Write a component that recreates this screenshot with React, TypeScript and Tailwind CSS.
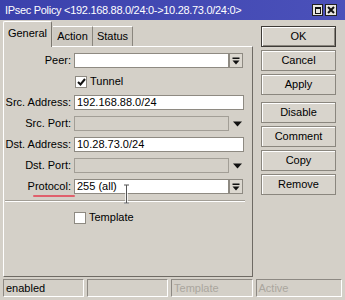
import { Fragment } from 'react'

const DropBtn = () => (
    <div className="flex h-[15px] w-[14px] items-center justify-center border border-[#8e8a82] bg-[#dcd8d0]">
        <svg width="8" height="8" viewBox="0 0 8 8">
            <rect x="0.5" y="0.5" width="7" height="1.5" fill="#111" />
            <path d="M0.5 3.5 H7.5 L4 7.5 Z" fill="#111" />
        </svg>
    </div>
)

const Arrow = () => (
    <div className="flex h-[15px] w-[16px] items-center justify-center">
        <svg width="9" height="6" viewBox="0 0 9 6">
            <path d="M0 0.5 H9 L4.5 5.5 Z" fill="#111" />
        </svg>
    </div>
)

const Check = ({ checked }: { checked: boolean }) => (
    <div className="flex h-[12px] w-[12px] items-center justify-center border border-[#8e8a82] bg-white">
        {checked && (
            <svg width="9" height="8" viewBox="0 0 9 8">
                <path d="M1 4 L3.5 6.5 L8 1" stroke="#111" strokeWidth="2" fill="none" />
            </svg>
        )}
    </div>
)

type RowProps = {
    label: string
    value?: string
    kind: 'drop' | 'text' | 'port'
    children?: React.ReactNode
}

const Row = ({ label, value, kind, children }: RowProps) => (
    <div className="relative flex h-[21px] items-center">
        <div className="w-[67px] text-right">{label}</div>
        <div className="ml-[3px] flex items-center">
            {kind === 'text' && (
                <div className="flex h-[15px] w-[170px] items-center border border-[#8e8a82] bg-white pl-[2px]">
                    {value}
                </div>
            )}
            {kind === 'drop' && (
                <Fragment>
                    <div className="flex h-[15px] w-[155px] items-center border border-[#8e8a82] bg-white pl-[2px]">
                        {value}
                    </div>
                    <DropBtn />
                </Fragment>
            )}
            {kind === 'port' && (
                <Fragment>
                    <div className="h-[15px] w-[155px] border border-[#a29e96] bg-[#d4d0c8]" />
                    <Arrow />
                </Fragment>
            )}
        </div>
        {children}
    </div>
)

const Button = ({ label, primary }: { label: string; primary?: boolean }) => (
    <div
        className={
            primary
                ? 'flex h-[21px] w-[75px] items-center justify-center border border-[#3e3b37] bg-[#d8d4cc] shadow-[inset_1px_1px_0_#ffffff,inset_-1px_-1px_0_#8a867e]'
                : 'flex h-[21px] w-[75px] items-center justify-center border border-[#8a867e] bg-[#d8d4cc] shadow-[inset_1px_1px_0_#ffffff]'
        }
    >
        {label}
    </div>
)

const App = () => {
    return (
        <div className="flex h-[300px] w-[345px] flex-col overflow-hidden bg-[#d4d0c8] font-['Liberation_Sans',Arial,sans-serif] text-[11px] text-black">
            <div className="flex h-[20px] items-center bg-gradient-to-r from-[#3b41ac] to-[#4b51ba] pl-[5px] pr-[8px] text-white">
                <span className="flex-1 tracking-[-0.3px]">
                    IPsec Policy &lt;192.168.88.0/24:0-&gt;10.28.73.0/24:0&gt;
                </span>
                <div className="flex gap-[2px]">
                    <div className="flex h-[12px] w-[11px] items-center justify-center border border-[#222] bg-[#e8e6e0]">
                        <div className="h-[7px] w-[6px] border border-[#111] border-t-2" />
                    </div>
                    <div className="flex h-[12px] w-[12px] items-center justify-center border border-[#222] bg-[#e8e6e0]">
                        <svg width="8" height="8" viewBox="0 0 8 8">
                            <path d="M1 1 L7 7 M7 1 L1 7" stroke="#111" strokeWidth="2" />
                        </svg>
                    </div>
                </div>
            </div>
            <div className="flex flex-1">
                <div className="flex w-[253px] flex-col pb-[2px] pl-[3px]">
                    <div className="flex h-[26px] items-end">
                        <div className="relative z-10 -mb-[1px] flex h-[26px] w-[49px] items-center justify-center rounded-t-[2px] border-l border-r border-t border-l-white border-r-[#7a766e] border-t-white bg-[#d4d0c8] pb-[2px]">
                            General
                        </div>
                        <div className="ml-[1px] flex h-[20px] w-[40px] items-center justify-center border-r border-t border-r-[#8a867e] border-t-white bg-[#cdc9c1]">
                            Action
                        </div>
                        <div className="flex h-[20px] w-[40px] items-center justify-center border-r border-t border-r-[#8a867e] border-t-white bg-[#cdc9c1]">
                            Status
                        </div>
                    </div>
                    <div className="flex flex-1 flex-col border border-b-[#6e6a64] border-l-white border-r-[#6e6a64] border-t-white pt-[3px]">
                        <Row label="Peer:" kind="drop" value="" />
                        <div className="flex h-[21px] items-center">
                            <div className="w-[67px]" />
                            <div className="ml-[4px] flex items-center gap-[3px]">
                                <Check checked />
                                <span>Tunnel</span>
                            </div>
                        </div>
                        <Row label="Src. Address:" kind="text" value="192.168.88.0/24" />
                        <Row label="Src. Port:" kind="port" />
                        <Row label="Dst. Address:" kind="text" value="10.28.73.0/24" />
                        <Row label="Dst. Port:" kind="port" />
                        <Row label="Protocol:" kind="drop" value="255 (all)">
                            <span className="absolute left-[29px] top-[19px] h-[2px] w-[42px] rounded-full bg-[#e0606c]" />
                            <svg
                                className="absolute left-[119px] top-[8px]"
                                width="7"
                                height="20"
                                viewBox="0 0 7 20"
                            >
                                <path
                                    d="M1 1 H6 M3.5 1 V19 M1 19 H6"
                                    stroke="#ffffff"
                                    strokeWidth="2.5"
                                    fill="none"
                                />
                                <path
                                    d="M1 1 H6 M3.5 1 V19 M1 19 H6"
                                    stroke="#555"
                                    strokeWidth="1"
                                    fill="none"
                                />
                            </svg>
                        </Row>
                        <div className="mx-[1px] mt-[3px] w-[240px] border-b border-t border-b-white border-t-[#a29e96]" />
                        <div className="mt-[5px] flex h-[21px] items-center">
                            <div className="w-[67px]" />
                            <div className="ml-[3px] flex items-center gap-[3px]">
                                <Check checked={false} />
                                <span>Template</span>
                            </div>
                        </div>
                    </div>
                </div>
                <div className="flex flex-col pl-[8px] pt-[6px]">
                    <div className="flex flex-col gap-[3px]">
                        <Button label="OK" primary />
                        <Button label="Cancel" />
                        <Button label="Apply" />
                    </div>
                    <div className="mt-[7px] flex flex-col gap-[3px]">
                        <Button label="Disable" />
                        <Button label="Comment" />
                        <Button label="Copy" />
                        <Button label="Remove" />
                    </div>
                </div>
            </div>
            <div className="flex h-[21px] gap-[3px] px-[3px] pb-[3px]">
                <div className="flex w-[81px] items-center border border-b-white border-l-[#8d8983] border-r-white border-t-[#8d8983] pl-[2px]">
                    enabled
                </div>
                <div className="w-[82px] border border-b-white border-l-[#8d8983] border-r-white border-t-[#8d8983]" />
                <div className="flex w-[82px] items-center border border-b-white border-l-[#8d8983] border-r-white border-t-[#8d8983] pl-[2px] text-[#aaa69e]">
                    Template
                </div>
                <div className="flex w-[87px] items-center border border-b-white border-l-[#8d8983] border-r-white border-t-[#8d8983] pl-[2px] text-[#aaa69e]">
                    Active
                </div>
            </div>
        </div>
    )
}

export default App
